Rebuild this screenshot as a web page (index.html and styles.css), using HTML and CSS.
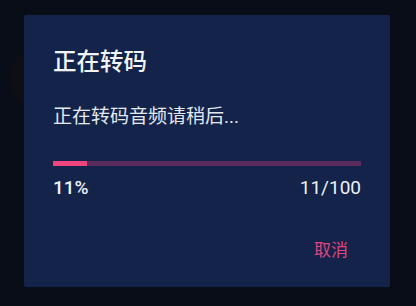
FILE: index.html
```html
<!DOCTYPE html>
<html lang="zh-CN">
<head>
    <meta charset="UTF-8">
    <meta name="viewport" content="width=device-width, initial-scale=1.0">
    <title>正在转码</title>
    <link rel="stylesheet" href="styles.css">
</head>
<body>
    <div class="backdrop">
        <div class="avatar-shadow"></div>
        <div class="dialog">
            <h2 class="title">正在转码</h2>
            <p class="message">正在转码音频请稍后...</p>
            <div class="progress">
                <div class="progress-fill" style="width: 11%;"></div>
            </div>
            <div class="progress-labels">
                <span class="percent">11%</span>
                <span>11/100</span>
            </div>
            <div class="actions">
                <button class="cancel">取消</button>
            </div>
        </div>
    </div>
</body>
</html>
```

FILE: styles.css
```css
body {
    margin: 0;
    background-color: #090d17;
    font-family: Roboto, "Noto Sans CJK SC", sans-serif;
    color: #e9edf5;
}

.backdrop {
    position: relative;
    width: 416px;
    height: 306px;
    padding-top: 15px;
    padding-left: 24px;
    box-sizing: border-box;
    overflow: hidden;
}

.avatar-shadow {
    position: absolute;
    left: 10px;
    top: 46px;
    width: 64px;
    height: 64px;
    border-radius: 50%;
    background-color: #0e0e14;
}

.dialog {
    position: relative;
    width: 366px;
    height: 272px;
    box-sizing: border-box;
    padding: 32px 29px 0;
    background-color: #13234a;
    border-radius: 2px;
}

.title {
    margin: 0;
    font-size: 23.5px;
    line-height: 30px;
    font-weight: 500;
    color: #f2f4f8;
}

.message {
    margin: 27px 0 0;
    font-size: 19px;
    line-height: 26px;
    color: #e4e8f0;
}

.progress {
    margin-top: 31px;
    height: 5px;
    background-color: #5a2b5c;
}

.progress-fill {
    height: 100%;
    background-color: #f0447f;
}

.progress-labels {
    margin-top: 10px;
    display: flex;
    justify-content: space-between;
    font-size: 19px;
    line-height: 24px;
    color: #eef1f6;
}

.percent {
    font-weight: 500;
}

.actions {
    margin-top: 37px;
    display: flex;
    justify-content: flex-end;
}

.cancel {
    margin-right: 13px;
    padding: 0;
    border: none;
    background: none;
    font-family: "Noto Sans CJK SC", sans-serif;
    font-size: 17px;
    line-height: 24px;
    color: #e0457f;
    cursor: pointer;
}
```
